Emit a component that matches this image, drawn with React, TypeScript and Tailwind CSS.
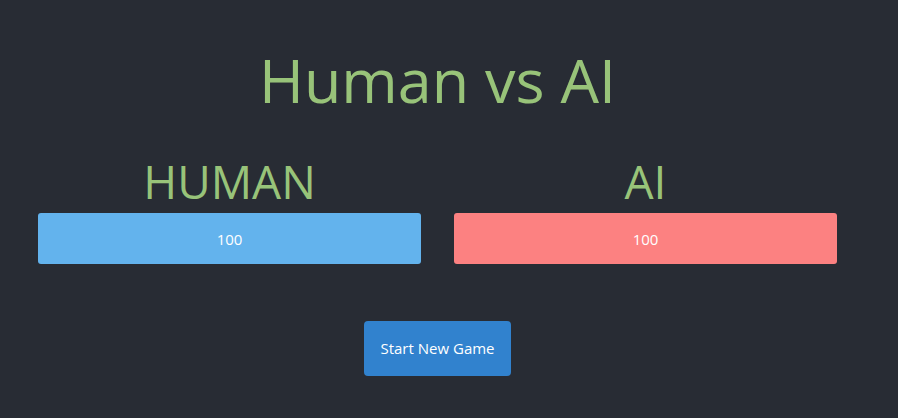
export default function App() {
  return (
    <div
      className="min-h-[418px] w-full bg-[#282c34]"
      style={{ fontFamily: '"Open Sans", "Noto Sans", sans-serif' }}
    >
      <div className="flex w-[875px] flex-col items-center pt-[38px]">
        <h1 className="text-[61px] leading-[84px] text-[#98c379]">Human vs AI</h1>

        <div className="mt-[31px] flex w-full gap-[33px] px-[38px]">
          <div className="flex w-[383px] flex-col items-center">
            <h2 className="text-[46px] leading-[56px] text-[#98c379]">HUMAN</h2>
            <div className="mt-[4px] flex h-[51px] w-full items-center justify-center rounded-[3px] bg-[#63b3ed] pt-[1px] text-[15px] text-white">
              100
            </div>
          </div>
          <div className="flex w-[383px] flex-col items-center">
            <h2 className="text-[46px] leading-[56px] text-[#98c379]">AI</h2>
            <div className="mt-[4px] flex h-[51px] w-full items-center justify-center rounded-[3px] bg-[#fc8181] pt-[1px] text-[15px] text-white">
              100
            </div>
          </div>
        </div>

        <button className="mt-[57px] h-[55px] w-[147px] rounded-[4px] bg-[#3182ce] text-[15px] text-white">
          Start New Game
        </button>
      </div>
    </div>
  );
}
